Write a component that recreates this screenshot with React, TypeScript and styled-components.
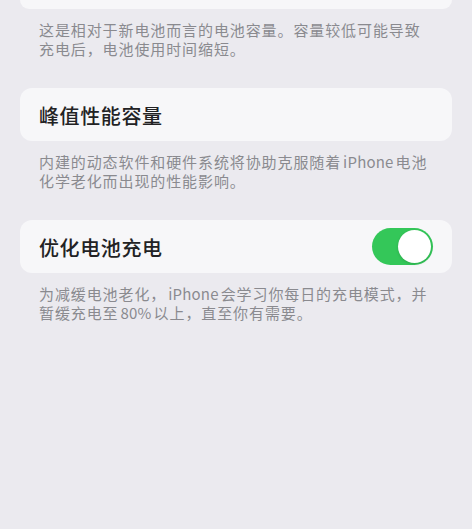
import React, { useState } from 'react';
import styled, { createGlobalStyle } from 'styled-components';

const colors = {
    background: '#ebeaef',
    card: '#f7f7f9',
    title: '#222224',
    footnote: '#8a8a8f',
    green: '#34c759',
    white: '#ffffff',
};

const GlobalStyle = createGlobalStyle`
    html, body {
        margin: 0;
        padding: 0;
        background: ${colors.background};
    }
    body {
        font-family: 'Noto Sans CJK SC', 'Noto Sans', sans-serif;
        -webkit-font-smoothing: antialiased;
    }
`;

interface SettingSectionProps {
    title: string;
    footnote: string[];
    toggle?: boolean;
}

// footnote lines are kept as in the screenshot so they wrap at the same place
const FootnoteText = ({ lines }: { lines: string[] }) => (
    <Footnote>
        {lines.map((line) => (
            <FootnoteLine key={line}>
                {line.split(/(iPhone|80%)/).map((part, i) =>
                    part === 'iPhone' || part === '80%' ? <Latin key={i}>{part}</Latin> : part
                )}
            </FootnoteLine>
        ))}
    </Footnote>
);

const SettingSection = (props: SettingSectionProps) => {
    const { title, footnote, toggle } = props;
    const [isOn, setOn] = useState(true);

    return (
        <Section>
            <Card>
                <Title>{title}</Title>
                {toggle && (
                    <Switch $on={isOn} onClick={() => setOn(!isOn)}>
                        <Knob $on={isOn} />
                    </Switch>
                )}
            </Card>
            <FootnoteText lines={footnote} />
        </Section>
    );
};

const App = () => {
    return (
        <>
            <GlobalStyle />
            <Page>
                <Section>
                    <CardStub />
                    <FootnoteText
                        lines={[
                            '这是相对于新电池而言的电池容量。容量较低可能导致',
                            '充电后，电池使用时间缩短。',
                        ]}
                    />
                </Section>
                <SettingSection
                    title="峰值性能容量"
                    footnote={[
                        '内建的动态软件和硬件系统将协助克服随着iPhone电池',
                        '化学老化而出现的性能影响。',
                    ]}
                />
                <SettingSection
                    title="优化电池充电"
                    toggle
                    footnote={[
                        '为减缓电池老化，iPhone会学习你每日的充电模式，并',
                        '暂缓充电至80%以上，直至你有需要。',
                    ]}
                />
            </Page>
        </>
    );
};

const Page = styled.div`
    width: 472px;
    height: 529px;
    box-sizing: border-box;
    padding: 0 20px;
    background: ${colors.background};
    overflow: hidden;
`;

const Section = styled.div`
    display: flex;
    flex-direction: column;
    margin-bottom: 30px;
`;

const CardStub = styled.div`
    height: 9px;
    background: ${colors.card};
    border-radius: 0 0 12px 12px;
`;

const Card = styled.div`
    height: 53px;
    display: flex;
    align-items: center;
    justify-content: space-between;
    padding: 0 19px;
    background: ${colors.card};
    border-radius: 12px;
`;

const Title = styled.div`
    font-size: 20px;
    line-height: 24px;
    font-weight: 500;
    color: ${colors.title};
    letter-spacing: 0.6px;
    margin-top: 2px;
`;

const Footnote = styled.div`
    margin-top: 11px;
    padding: 0 19px;
    font-size: 15px;
    line-height: 19px;
    letter-spacing: 0.9px;
    color: ${colors.footnote};
`;

const FootnoteLine = styled.div`
    white-space: nowrap;
`;

const Latin = styled.span`
    letter-spacing: 0.2px;
    margin: 0 2px;
`;

const Switch = styled.div<{ $on: boolean }>`
    width: 61px;
    height: 37px;
    border-radius: 19px;
    background: ${({ $on }) => ($on ? colors.green : '#e3e3e8')};
    position: relative;
    cursor: pointer;
    flex-shrink: 0;
`;

const Knob = styled.div<{ $on: boolean }>`
    position: absolute;
    top: 2px;
    left: ${({ $on }) => ($on ? '26px' : '2px')};
    width: 33px;
    height: 33px;
    border-radius: 50%;
    background: ${colors.white};
    box-shadow: 0 1px 3px rgba(0, 0, 0, 0.15);
`;

export default App;
